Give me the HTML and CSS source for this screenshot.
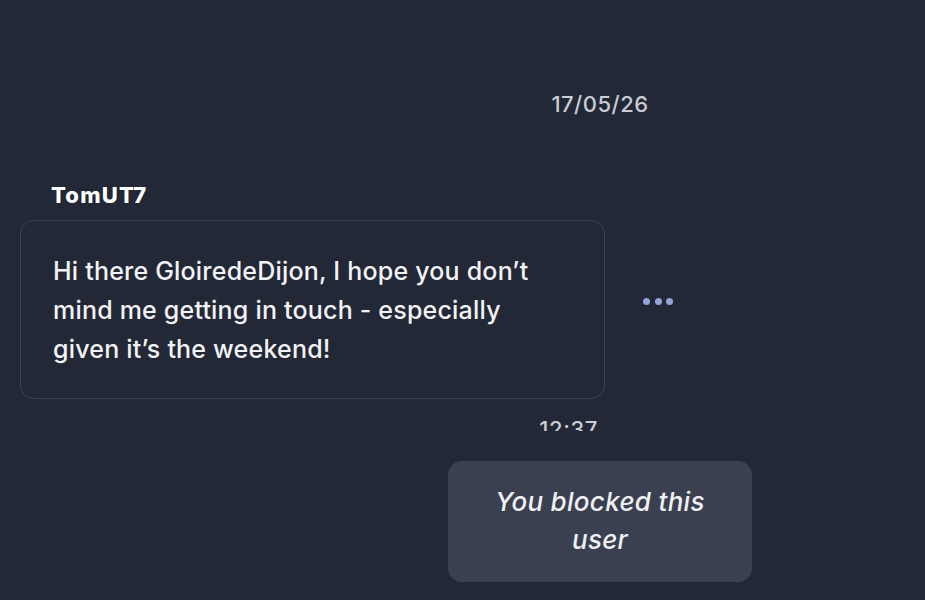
FILE: index.html
```html
<!DOCTYPE html>
<html lang="en">
<head>
<meta charset="utf-8">
<title>Conversation</title>
<link rel="stylesheet" href="styles.css">
</head>
<body>
<main class="thread">
  <div class="date">17/05/26</div>
  <section class="message">
    <div class="sender">TomUT7</div>
    <div class="message-row">
      <div class="bubble">Hi there GloiredeDijon, I hope you don’t mind me getting in touch - especially given it’s the weekend!</div>
      <button class="more" aria-label="More options"><span></span><span></span><span></span></button>
    </div>
    <div class="time-clip"><div class="time">12:37</div></div>
  </section>
  <div class="blocked-row">
    <div class="blocked">You blocked this user</div>
  </div>
</main>
</body>
</html>
```
FILE: styles.css
```css
html, body {
  margin: 0;
  padding: 0;
  background: #222835;
  overflow: hidden;
  height: 600px;
}
body {
  font-family: Inter, "Noto Sans", "Liberation Sans", sans-serif;
  color: #f0f1f4;
}
.thread {
  width: 1200px;
  padding-top: 91px;
}
.date {
  text-align: center;
  font-size: 22px;
  line-height: 27px;
  font-weight: 500;
  letter-spacing: 0.5px;
  color: #c8ccd4;
}
.message {
  margin-top: 64px;
  padding-left: 20px;
}
.sender {
  padding-left: 31px;
  font-size: 22px;
  line-height: 26px;
  font-weight: 800;
  color: #ffffff;
  letter-spacing: 1.2px;
}
.message-row {
  margin-top: 12px;
  display: flex;
  align-items: center;
  gap: 38px;
}
.bubble {
  box-sizing: border-box;
  width: 585px;
  border: 1px solid #3b4252;
  border-radius: 14px;
  padding: 31px 32px 29px;
  font-size: 25px;
  line-height: 39px;
  font-weight: 500;
  letter-spacing: 0.2px;
  color: #f2f3f6;
}
.more {
  display: flex;
  gap: 4.5px;
  padding: 0;
  margin: 0 0 17px;
  border: 0;
  background: none;
}
.more span {
  width: 7px;
  height: 7px;
  border-radius: 50%;
  background: #93a3da;
}
.time-clip {
  width: 585px;
  margin-top: 16px;
  height: 16px;
  overflow: hidden;
}
.time {
  text-align: right;
  padding-right: 7px;
  padding-top: 1px;
  font-size: 22px;
  line-height: 26px;
  font-weight: 500;
  letter-spacing: 0.6px;
  color: #c8ccd4;
}
.blocked-row {
  margin-top: 30px;
  display: flex;
  justify-content: center;
}
.blocked {
  box-sizing: border-box;
  width: 304px;
  height: 121px;
  background: #3a404f;
  border-radius: 14px;
  padding: 22px 20px;
  text-align: center;
  font-style: italic;
  font-size: 26px;
  line-height: 38px;
  font-weight: 500;
  letter-spacing: 0.3px;
  color: #eef0f4;
}
```
